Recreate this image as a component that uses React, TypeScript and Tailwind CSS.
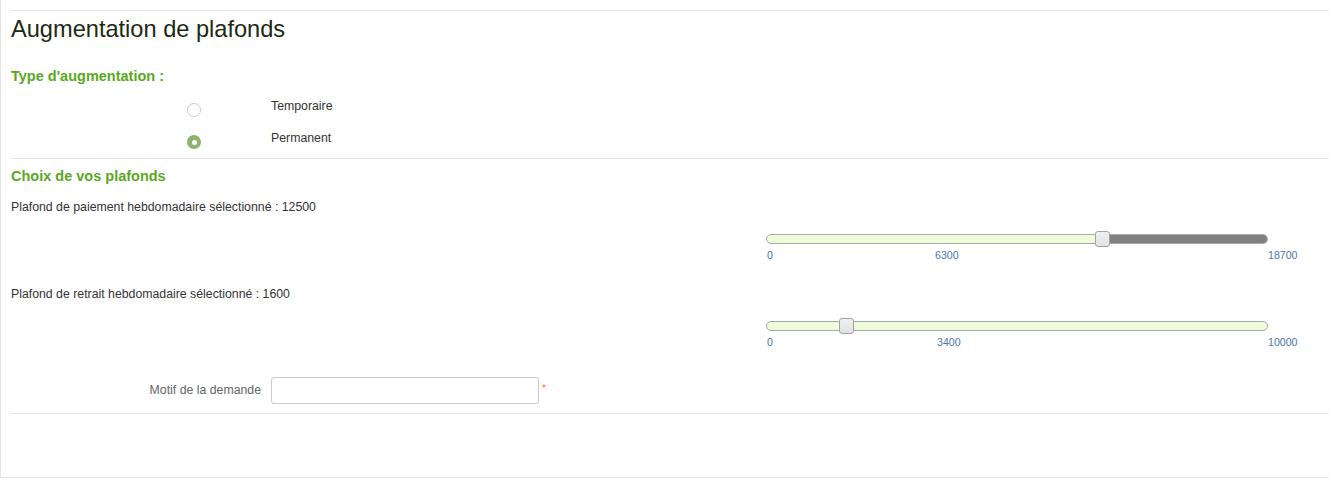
import { useState } from 'react'

type SliderProps = {
  max: number
  value: number
  mid: number
  darkRest?: boolean
}

const TRACK_W = 502

function Slider({ max, value, mid, darkRest }: SliderProps) {
  const pos = (v: number) => Math.round((v / max) * TRACK_W)
  const handle = pos(value)

  return (
    <div className="ml-[755px] w-[560px]">
      <div className="relative h-[16px] w-[502px]">
        <div className="absolute left-0 right-0 top-[3px] flex h-[10px] overflow-hidden rounded-full border border-[#a8a8a8] bg-[#effcd9]">
          {darkRest && (
            <div className="ml-auto h-full bg-[#808080]" style={{ width: TRACK_W - handle }} />
          )}
        </div>
        <div
          className="absolute top-0 h-[16px] w-[15px] rounded-[3px] border border-[#a3a3a3] bg-gradient-to-b from-[#f0f0f0] to-[#e2e2e2]"
          style={{ left: handle - 7 }}
        />
      </div>
      <div className="relative mt-[1px] h-[14px] text-[10.6px] leading-[14px] text-[#4a76b5]">
        <span className="absolute left-[1px]">0</span>
        <span className="absolute" style={{ left: pos(mid) }}>
          {mid}
        </span>
        <span className="absolute" style={{ left: TRACK_W }}>
          {max}
        </span>
      </div>
    </div>
  )
}

function Radio({ checked }: { checked: boolean }) {
  return checked ? (
    <span className="flex h-[14px] w-[14px] items-center justify-center rounded-full bg-[#8db36c]">
      <span className="h-[5px] w-[5px] rounded-full bg-white" />
    </span>
  ) : (
    <span className="block h-[14px] w-[14px] rounded-full border border-[#cccccc] bg-white" />
  )
}

export default function App() {
  const [type, setType] = useState('permanent')
  const [motif, setMotif] = useState('')

  const options = [
    { id: 'temporaire', label: 'Temporaire' },
    { id: 'permanent', label: 'Permanent' },
  ]

  return (
    <div className="h-[478px] w-[1329px] border-b border-l border-[#e6e6e6] bg-white font-['Liberation_Sans',Arial,sans-serif] text-[12.3px] text-[#333333]">
      <div className="pl-[10px] pt-[10px]">
        <div className="border-t border-[#e6e6e6]" />
        <h1 className="mt-[5px] text-[23.6px] leading-[26px] text-[#1c2a12]">Augmentation de plafonds</h1>

        <h2 className="mt-[24px] text-[14.5px] font-bold leading-[20px] text-[#5ba81e]">
          Type d'augmentation :
        </h2>
        <div className="mt-[8px]">
          {options.map((o) => (
            <label key={o.id} className="flex h-[32px] cursor-pointer items-start" onClick={() => setType(o.id)}>
              <span className="ml-[176px] mt-[9px]">
                <Radio checked={type === o.id} />
              </span>
              <span className="ml-[70px] mt-[4px] leading-[16px]">{o.label}</span>
            </label>
          ))}
        </div>
        <div className="border-t border-[#e6e6e6]" />

        <h2 className="mt-[7px] text-[14.5px] font-bold leading-[20px] text-[#5ba81e]">Choix de vos plafonds</h2>
        <p className="mt-[13px] leading-[16px]">Plafond de paiement hebdomadaire sélectionné : 12500</p>
        <div className="mt-[16px]">
          <Slider max={18700} value={12500} mid={6300} darkRest />
        </div>

        <p className="mt-[24px] leading-[16px]">Plafond de retrait hebdomadaire sélectionné : 1600</p>
        <div className="mt-[16px]">
          <Slider max={10000} value={1600} mid={3400} />
        </div>

        <div className="mt-[28px] flex items-center">
          <span className="w-[250px] text-right text-[#666666]">Motif de la demande</span>
          <input
            value={motif}
            onChange={(e) => setMotif(e.target.value)}
            className="ml-[10px] h-[27px] w-[268px] rounded-[3px] border border-[#cccccc] px-2 outline-none"
          />
          <span className="mb-[4px] ml-[3px] text-[10px] text-[#f27b2e]">*</span>
        </div>
        <div className="mt-[9px] border-t border-[#e6e6e6]" />
      </div>
    </div>
  )
}
